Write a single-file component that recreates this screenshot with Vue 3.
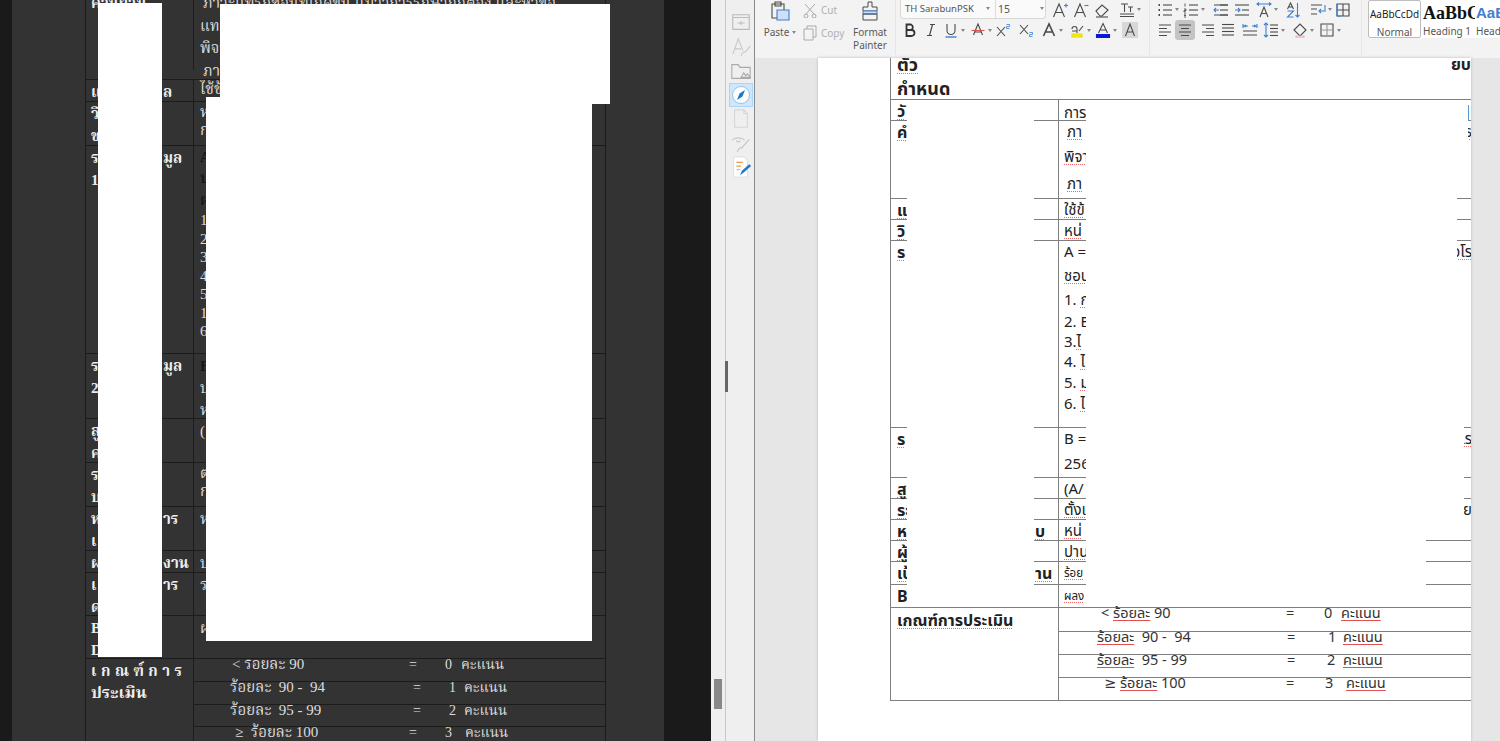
<script setup>
const S = '#4a4a4a', B = '#3d7fd6', R = '#d9534f'
const p = (d, stroke = S, fill = 'none', w = 1.1) => ({ d, stroke, fill, w })
const lines = (ys, x1 = 2, x2 = 14, c = S) => ys.map(y => p(`M${x1} ${y}H${x2}`, c))
const icons = {
  b: [p('M4.5 2.5h4.5a3 3 0 0 1 0 5.5H4.5zM4.5 8h5a3 3 0 0 1 0 6h-5z', '#333', 'none', 1.8)],
  i: [p('M7 2.5h5M4 13.5h5M9.5 2.5l-3 11', S, 'none', 1.2)],
  u: [p('M4 2v6.5a4 4 0 0 0 8 0V2', S), p('M2.5 15h11', B, 'none', 1.4)],
  strike: [p('M3.5 13L8 2l4.5 11M5 10h6', S), p('M1.5 8.5h13', R)],
  sup: [p('M2 5l8 9M10 5l-8 9', S), p('M11.5 2.5h3v2h-3v2h3', B, 'none', .8)],
  sub: [p('M2 3l8 9M10 3l-8 9', S), p('M11.5 10.5h3v2h-3v2h3', B, 'none', .8)],
  aout: [p('M2.5 14L8 2l5.5 12M5 10h6', S, 'none', 1.6)],
  hl: [p('M3 7a2.5 2.5 0 0 1 5 0v4M3 9h5M10 9l4-5', S), p('M3 12h10v3H3z', '#e6d90c', '#f7ea12')],
  acol: [p('M3.5 11L8 1.5l4.5 9.5M5 8h6', S), p('M1.5 12.5h13v3h-13z', '#0a18d8', '#0a18d8')],
  shade: [p('M0 0h16v16H0z', 'none', '#d8d8d8'), p('M3.5 14L8 2l4.5 12M5 10h6', S)],
  ainc: [p('M1.5 15L7 2l5.500 13M3.5 10.5h7', S), p('M12 3.5h4M14 1.5v4', B)],
  adec: [p('M1.5 15L7 2l5.500 13M3.5 10.5h7', S), p('M11.5 3.5h4', B)],
  erase: [p('M2 9l6-6 6 5-6 6H6z', S), p('M2 15h12', S)],
  tt: [p('M2 2h7M5.5 2v8M9 5h5M11.5 5v5', S), p('M1 12h14M1 14.5h14', S)],
  bullet: [...lines([3, 8, 13], 6, 15), p('M1.5 3h1.5M1.5 8h1.5M1.5 13h1.5', S, 'none', 2)],
  num: [...lines([3, 8, 13], 6, 15), p('M2 1.5v3M1 7h2v1.5H1V10h2M1 12h2M1 13.5h2M1 15h2', S, 'none', .9)],
  out: [...lines([3, 8, 13], 7, 15), p('M1 3h14M1 13h14', S), p('M6 8H1M3 6L1 8l2 2', B)],
  ind: [...lines([3, 13], 1, 15), p('M8 8h7', S), p('M1 8h5M4 6l2 2-2 2', B)],
  aspace: [p('M4 15L8 5l4 10M5.5 11.5h5', S), p('M1 2h14M3 .5L1 2l2 1.5M13 .5L15 2l-2 1.5', B)],
  sort: [p('M2.5 7L5.5 1l3 6M3.5 5h4', S), p('M2.5 9h6l-6 6h6', B), p('M12.5 1v14M10.5 13l2 2 2-2', B)],
  para: [p('M1 3h11M1 7h6M1 12h6', S), p('M15 3v6h-6M11 7l-2 2 2 2', B)],
  table: [p('M2 2h12v12H2zM8 2v12M2 8h12', S), p('M2 2v12M2 14h4', B)],
  left: [p('M2 3h12M2 6.5h8M2 10h12M2 13.5h8')],
  center: [p('M2 3h12M4 6.5h8M2 10h12M4 13.5h8')],
  right: [p('M2 3h12M6 6.5h8M2 10h12M6 13.5h8')],
  just: lines([2.5, 6, 9.5, 13]),
  dist: [p('M1 9h14M1 13h14'), p('M1 2v4M15 2v4M2 4h4M10 4h4M4 3L2 4l2 1M12 3l2 1-2 1', B)],
  lsp: [...lines([3, 6.5, 10, 13.5], 7, 15), p('M3 1v14M1 3l2-2 2 2M1 13l2 2 2-2', B)],
  fill: [p('M2 8l6-6 6 6-6 6z', S), p('M4 14h8v2H4z', '#e8b8b8', '#f3d8d8')],
  border: [p('M2 2h12v12H2z', S), p('M8 2v12M2 8h12', '#999')],
  paste: [p('M4 3h12v14H4z', S), p('M7 1h6v4H7z', S), p('M9 9h12v10H9z', B, '#cfe0f5')],
  cut: [p('M3 2l9 10M13 2L4 12', '#aaa'), p('M2 14a2 2 0 1 0 4 0 2 2 0 1 0-4 0M10 14a2 2 0 1 0 4 0 2 2 0 1 0-4 0', '#aaa')],
  copy: [p('M5 1h9v11H5z', '#aaa'), p('M2 4h9v11H2z', '#aaa', '#f3f3f3')],
  brush: [p('M8 1h4v5h5v4H3V6h5z', S), p('M3 10h14v3H3z', B, '#cfe0f5'), p('M3 13h14v6H3z', S)],
}
const row1a = [
  { i: 'ainc', ml: 6 }, { i: 'adec', ml: 5 }, { i: 'erase', ml: 5 }, { i: 'tt', ml: 9, a: 1 },
]
const row2a = [
  { i: 'b', ml: 2 }, { i: 'i', ml: 5 }, { i: 'u', ml: 4, a: 1 }, { i: 'strike', ml: 5, a: 1 }, { i: 'sup', ml: 3 },
  { i: 'sub', ml: 7 }, { i: 'aout', ml: 7, a: 1 }, { i: 'hl', ml: 6, a: 1 }, { i: 'acol', ml: 4, a: 1 }, { i: 'shade', ml: 5 },
]
const row1b = [
  { i: 'bullet', ml: 7, a: 1 }, { i: 'num', ml: 4, a: 1 }, { i: 'out', ml: 8 }, { i: 'ind', ml: 5 },
  { i: 'aspace', ml: 6, a: 1 }, { i: 'sort', ml: 7 }, { i: 'para', ml: 9, a: 1 }, { i: 'table', ml: 3 },
]
const row2b = [
  { i: 'left', ml: 7 }, { i: 'center', ml: 4, on: 1 }, { i: 'right', ml: 5 }, { i: 'just', ml: 4 }, { i: 'dist', ml: 6 },
  { i: 'lsp', ml: 5, a: 1 }, { i: 'fill', ml: 7, a: 1 }, { i: 'border', ml: 5, a: 1 },
]

const leftRows = [
  { h: 80, clip: -9, label: [{ a: 'คำนิยาม' }], val: [{ t: 'ภาวะแทรกซ้อนที่เกิดขึ้น แม้ว่าการรักษาถูกต้อง และหัวข้อ', in: 1, lh: 23 }, { t: 'แท', lh: 22 }, { t: 'พิจา', lh: 23 }, { t: 'ภา', in: 1, lh: 22 }] },
  { h: 22, label: [{ a: 'แ', b: 'ล' }], val: [{ t: 'ใช้ข้', lh: 16 }] },
  { h: 44, label: [{ a: 'วิ' }, { a: 'ข' }], val: [{ t: 'ห', lh: 18 }, { t: 'ก', lh: 18 }] },
  { h: 208, label: [{ a: 'ร', b: 'มูล' }, { a: '1' }], val: [{ t: 'A', dark: 1, lh: 20 }, { t: 'บ', dark: 1 }, { t: 'ผ', dark: 1 }, ...['1', '2', '3', '4', '5', '1', '6'].map(t => ({ t, lh: 18.5 }))] },
  { h: 65, label: [{ a: 'ร', b: 'มูล' }, { a: '2' }], val: [{ t: 'B', dark: 1 }, { t: 'บ' }, { t: 'ห' }] },
  { h: 44, label: [{ a: 'สู' }, { a: 'ค' }], val: [{ t: '(' }] },
  { h: 44, label: [{ a: 'ร' }, { a: 'บ', b: '' }], val: [{ t: 'ต', lh: 18 }, { t: 'ก', lh: 18 }] },
  { h: 44, label: [{ a: 'ห', b: 'าร' }, { a: 'เ' }], val: [{ t: 'ห' }] },
  { h: 22, label: [{ a: 'ผ', b: 'งาน' }], val: [{ t: 'บ' }] },
  { h: 43, label: [{ a: 'เ', b: 'าร' }, { a: 'ด' }], val: [{ t: 'ร' }] },
  { h: 43, label: [{ a: 'B' }, { a: 'D' }], val: [{ t: 'ผ' }] },
]
const leftCrit = [
  { h: 23, pos: [38, 215, 251, 267], t: ['< ร้อยละ 90', '=', '0', 'คะแนน'] },
  { h: 23, pos: [36, 219, 255, 270], t: ['ร้อยละ  90 -  94', '=', '1', 'คะแนน'] },
  { h: 22, pos: [36, 219, 255, 270], t: ['ร้อยละ  95 - 99', '=', '2', 'คะแนน'] },
  { h: 30, pos: [41, 215, 251, 271], t: ['≥  ร้อยละ 100', '=', '3', 'คะแนน'] },
]
const cols = pos => ({
  paddingLeft: pos[0] + 'px',
  gridTemplateColumns: pos.slice(1).map((x, i) => `${x - pos[i]}px`).join(' ') + ' 1fr',
})

const docRows = [
  { h: 21, label: 'วั', val: [{ t: 'การ', plain: 1, lh: 25 }], tail: '|', tailPlain: 1 },
  { h: 78, label: 'คำ', val: [{ t: 'ภา', in: 1, lh: 25 }, { t: 'พิจา', lh: 25 }, { t: 'ภา', in: 1, lh: 28 }], tail: 'ธ' },
  { h: 21, label: 'แ', val: [{ t: 'ใช้ข้' }] },
  { h: 21, label: 'วิ', val: [{ t: 'หน่' }] },
  { h: 187, label: 'ร', val: [{ t: 'A =', plain: 1, lh: 24 }, { t: 'ชอบ', lh: 25 }, { pre: '1. ', t: 'ก', lh: 23 }, { t: '2. B', plain: 1, lh: 20 }, { pre: '3.', t: 'ไ', lh: 20 }, { pre: '4. ', t: 'ไ', lh: 21 }, { pre: '5. ', t: 'ม', lh: 21 }, { pre: '6. ', t: 'ไ', lh: 20 }], tail: 'จโร' },
  { h: 50, label: 'ร', val: [{ t: 'B =', plain: 1, lh: 25 }, { t: '256', plain: 1, lh: 25 }], tail: 'เร' },
  { h: 21, label: 'สู', val: [{ t: '(A/', plain: 1 }] },
  { h: 21, label: 'ระ', val: [{ t: 'ตั้งแ' }], tail: 'ย' },
  { h: 21, label: 'ห', end: 'บ', val: [{ t: 'หน่' }] },
  { h: 21, label: 'ผู้', val: [{ t: 'ปาน' }] },
  { h: 23, label: 'เป้', end: 'าน', val: [{ t: 'ร้อย', small: 1 }] },
  { h: 23, label: 'B', plain: 1, val: [{ t: 'ผลง', small: 1 }] },
]
const docCrit = [
  { h: 24, pos: [42, 227, 265, 282], t: ['<', 'ร้อยละ', ' 90', '=', '0', 'คะแนน'] },
  { h: 23, pos: [38, 228, 269, 284], t: ['', 'ร้อยละ', '  90 -  94', '=', '1', 'คะแนน'] },
  { h: 23, pos: [38, 228, 268, 284], t: ['', 'ร้อยละ', '  95 - 99', '=', '2', 'คะแนน'] },
  { h: 23, pos: [45, 227, 266, 287], t: ['≥', 'ร้อยละ', ' 100', '=', '3', 'คะแนน'] },
]
const docMasks = [
  [907, 1034, 100, 605], [1086, 1468, 100, 198], [1086, 1457, 198, 262], [1086, 1471, 262, 376],
  [1086, 1425, 376, 382], [1086, 1471, 382, 425], [1086, 1464, 425, 515], [1086, 1471, 515, 530], [1086, 1426, 530, 606],
]
const box = ([x1, x2, y1, y2]) => ({ left: x1 + 'px', width: x2 - x1 + 'px', top: y1 + 'px', height: y2 - y1 + 'px' })
const sideIcons = [
  { d: 'M3 3h18v16H3zM3 6h18M8 12h8M12 10v4', c: '#bbb' },
  { d: 'M3 20L9 3l5 13M5 14h7M12 22c1-4 4-5 5-5l5-6', c: '#c8c8c8' },
  { d: 'M2 20V5h7l2 3h11v12zM12 19l3-5 2 3 2-2 3 4z', c: '#aaa' },
  { d: '', c: '' },
  { d: 'M5 2h10l4 4v15H5zM15 2v4h4', c: '#d6d6d6' },
  { d: 'M2 9a8 5 0 0 1 14 0M7 9a2 2 0 1 0 4 0M8 22c1-4 3-5 5-5l8-9', c: '#c4c4c4' },
  { d: 'note', c: '' },
]
</script>

<template>
  <div class="screen">
    <section class="viewer">
      <div class="sheet">
        <div class="ltable">
          <div v-for="(r, i) in leftRows" :key="i" class="lrow" :style="{ height: r.h + 'px' }">
            <div class="lhead" :style="{ marginTop: (r.clip || 0) + 'px' }">
              <div v-for="(l, j) in r.label" :key="j" class="lline"><span class="la">{{ l.a }}</span><span class="lb">{{ l.b }}</span></div>
            </div>
            <div class="lval" :style="{ marginTop: (r.clip || 0) + 'px' }">
              <div v-for="(v, j) in r.val" :key="j" class="vline" :class="{ dark: v.dark, ind: v.in }" :style="{ lineHeight: (v.lh || 22) + 'px' }">{{ v.t }}</div>
            </div>
          </div>
          <div class="lrow last">
            <div class="lhead"><div class="lline spaced">เกณฑ์การ</div><div class="lline big">ประเมิน</div></div>
            <div class="lcrit">
              <div v-for="(c, i) in leftCrit" :key="i" class="crow" :style="[{ height: c.h + 'px' }, cols(c.pos)]">
                <span v-for="(t, j) in c.t" :key="j" :class="{ cfirst: j === 0 }">{{ t }}</span>
              </div>
            </div>
          </div>
        </div>
      </div>
    </section>

    <aside class="rail"><div class="thumb"></div></aside>

    <nav class="side">
      <div class="grip"></div>
      <div v-for="(s, i) in sideIcons" :key="i" class="sitem" :class="{ active: i === 3 }">
        <svg v-if="i === 3" width="20" height="20" viewBox="0 0 20 20"><circle cx="10" cy="10" r="8.5" fill="#fff" stroke="#8cc4ef"/><path d="M14 5L11.5 11.5 6 15l2.500-6.500z" fill="#1c79c6"/></svg>
        <svg v-else-if="s.d === 'note'" width="22" height="22" viewBox="0 0 24 24"><path d="M4 1h11l4 4v18H4z" fill="#fff" stroke="#ddd"/><path d="M7 7h7M7 11h5" stroke="#e89a4c" stroke-width="1.500"/><path d="M7 15h4" stroke="#aaa"/><path d="M11 21l2-5 8-7 2 2-8 7z" fill="#1c79c6"/></svg>
        <svg v-else width="22" height="22" viewBox="0 0 24 24"><path :d="s.d" fill="none" :stroke="s.c" stroke-width="1.200"/></svg>
      </div>
    </nav>

    <main class="word">
      <header class="ribbon">
        <div class="g-clip">
          <div class="paste">
            <svg width="24" height="21" viewBox="0 0 24 21"><path v-for="(q, k) in icons.paste" :key="k" :d="q.d" :stroke="q.stroke" :fill="q.fill" :stroke-width="q.w"/></svg>
            <span class="lab paste-lab">Paste<i class="arrow"></i></span>
          </div>
          <div class="cutcopy">
            <div class="cc"><svg width="16" height="16" viewBox="0 0 16 16"><path v-for="(q, k) in icons.cut" :key="k" :d="q.d" :stroke="q.stroke" :fill="q.fill"/></svg>Cut</div>
            <div class="cc"><svg width="16" height="16" viewBox="0 0 16 16"><path v-for="(q, k) in icons.copy" :key="k" :d="q.d" :stroke="q.stroke" :fill="q.fill"/></svg>Copy</div>
          </div>
          <div class="painter">
            <svg width="20" height="21" viewBox="0 0 20 21"><path v-for="(q, k) in icons.brush" :key="k" :d="q.d" :stroke="q.stroke" :fill="q.fill" stroke-width="1"/></svg>
            <span class="lab">Format</span><span class="lab">Painter</span>
          </div>
        </div>
        <div class="g-font">
          <div class="trow top">
            <div class="combo">
              <span class="fname">TH SarabunPSK</span><i class="arrow a1"></i>
              <span class="fsize">15</span><i class="arrow a2"></i>
            </div>
            <template v-for="t in row1a" :key="t.i">
              <svg class="ic" :style="{ marginLeft: t.ml + 'px' }" width="16" height="16" viewBox="0 0 16 16"><path v-for="(q, k) in icons[t.i]" :key="k" :d="q.d" :stroke="q.stroke" :fill="q.fill" :stroke-width="q.w"/></svg>
              <i v-if="t.a" class="arrow side-arrow"></i>
            </template>
          </div>
          <div class="trow">
            <template v-for="t in row2a" :key="t.i">
              <svg class="ic" :style="{ marginLeft: t.ml + 'px' }" width="16" height="16" viewBox="0 0 16 16"><path v-for="(q, k) in icons[t.i]" :key="k" :d="q.d" :stroke="q.stroke" :fill="q.fill" :stroke-width="q.w"/></svg>
              <i v-if="t.a" class="arrow side-arrow"></i>
            </template>
          </div>
        </div>
        <div class="g-para">
          <div class="trow top">
            <template v-for="t in row1b" :key="t.i">
              <svg class="ic" :style="{ marginLeft: t.ml + 'px' }" width="16" height="16" viewBox="0 0 16 16"><path v-for="(q, k) in icons[t.i]" :key="k" :d="q.d" :stroke="q.stroke" :fill="q.fill" :stroke-width="q.w"/></svg>
              <i v-if="t.a" class="arrow side-arrow"></i>
            </template>
          </div>
          <div class="trow">
            <template v-for="t in row2b" :key="t.i">
              <span class="ibox" :class="{ on: t.on }" :style="{ marginLeft: t.ml + 'px' }"><svg width="16" height="16" viewBox="0 0 16 16"><path v-for="(q, k) in icons[t.i]" :key="k" :d="q.d" :stroke="q.stroke" :fill="q.fill" :stroke-width="q.w"/></svg></span>
              <i v-if="t.a" class="arrow side-arrow"></i>
            </template>
          </div>
        </div>
        <div class="g-style">
          <div class="styles">
            <div class="st normal"><span class="sample s0">AaBbCcDd</span><span class="sname">Normal</span></div>
            <div class="st h1"><span class="sample s1">AaBbC</span><span class="sname">Heading 1</span></div>
            <div class="st h2"><span class="sample s2">AaBb</span><span class="sname">Heading 2</span></div>
          </div>
        </div>
      </header>

      <div class="canvas">
        <div class="page">
          <div class="doc">
            <div class="dtop">
              <div class="dtline first"><span class="sq">ตัว</span><span class="dtail">ยบ</span></div>
              <div class="dtline">กำหนด</div>
            </div>
            <div v-for="(r, i) in docRows" :key="i" class="drow" :style="{ height: r.h + 'px' }">
              <div class="dhead"><span :class="{ sq: !r.plain }">{{ r.label }}</span><span v-if="r.end" class="dend sq">{{ r.end }}</span></div>
              <div class="dval">
                <div class="dlines" :class="{ multi: r.val.length > 1 }">
                  <div v-for="(v, j) in r.val" :key="j" :class="{ dsmall: v.small, ind: v.in }" :style="{ lineHeight: (v.lh || 21) + 'px' }">{{ v.pre }}<span :class="{ sq: !v.plain }">{{ v.t }}</span></div>
                </div>
                <span v-if="r.tail" class="dtl" :class="{ sq: !r.tailPlain }">{{ r.tail }}</span>
              </div>
            </div>
            <div class="drow dlast">
              <div class="dhead crit"><span class="sq">เกณฑ์การประเมิน</span></div>
              <div class="dcrit">
                <div v-for="(c, i) in docCrit" :key="i" class="dcrow" :style="[{ height: c.h + 'px' }, cols(c.pos)]">
                  <span>{{ c.t[0] }}<template v-if="c.t[0]">&nbsp;</template><span class="red">{{ c.t[1] }}</span>{{ c.t[2] }}</span><span>{{ c.t[3] }}</span><span>{{ c.t[4] }}</span><span class="red">{{ c.t[5] }}</span>
                </div>
              </div>
            </div>
          </div>
        </div>
      </div>
    </main>

    <div class="mask" style="left:98px;top:3px;width:64px;height:654px"></div>
    <div class="mask" style="left:206px;top:97px;width:386px;height:544px"></div>
    <div class="mask" style="left:220px;top:4px;width:390px;height:100px"></div>
    <div class="frag">2563 (ห</div>
    <div v-for="(m, i) in docMasks" :key="'d' + i" class="mask" :style="box(m)"></div>
  </div>
</template>

<style>
html, body { margin: 0; padding: 0; overflow: hidden; background: #1a1a1a; }
</style>

<style scoped>
.screen { position: relative; display: flex; width: 1500px; height: 741px; overflow: hidden; font-family: "Noto Sans", "Noto Sans Thai", "DejaVu Sans", sans-serif; }
.mask { position: absolute; background: #fff; }
.frag { position: absolute; left: 1425px; top: 377px; width: 46px; height: 4px; overflow: hidden; font-size: 13px; line-height: 17px; color: #333; white-space: nowrap; }

.viewer { box-sizing: border-box; width: 711px; height: 741px; padding: 0 47px 0 12px; background: #1a1a1a; }
.sheet { box-sizing: border-box; height: 741px; padding-left: 73px; background: #333; overflow: hidden; }
.ltable { box-sizing: border-box; width: 521px; border-left: 1px solid #1c1c1c; border-right: 1px solid #1c1c1c; font-family: "Liberation Serif", "Noto Serif Thai", "DejaVu Serif", serif; color: #eee; }
.lrow { box-sizing: border-box; display: flex; border-bottom: 1px solid #1c1c1c; overflow: hidden; }
.lrow.last { height: 90px; border-bottom: 0; }
.lhead { box-sizing: border-box; flex: none; width: 108px; height: 100%; padding: 1px 0 0 5px; border-right: 1px solid #1c1c1c; font-weight: 700; font-size: 15px; }
.lline { display: grid; grid-template-columns: 72px auto; line-height: 22px; }
.lline.spaced { display: block; letter-spacing: 4.500px; white-space: nowrap; }
.last .lline { display: block; }
.lline.big { font-size: 16.500px; }
.la { white-space: nowrap; }
.lval { flex: 1; padding: 1px 0 0 6px; font-size: 15px; color: #ddd; white-space: nowrap; overflow: hidden; }
.vline.dark { color: #161616; font-weight: 600; }
.ind { padding-left: 3px; }
.lcrit { flex: 1; font-size: 14px; color: #ddd; }
.crow { box-sizing: border-box; display: grid; align-items: start; border-bottom: 1px solid #1c1c1c; white-space: pre; line-height: 11px; }
.cfirst { font-size: 15px; }

.rail { box-sizing: border-box; flex: none; width: 15px; height: 741px; padding: 679px 0 0 3px; background: #efefef; border-right: 1px solid #c8c8c8; }
.thumb { width: 8px; height: 30px; background: #888; }

.side { position: relative; box-sizing: border-box; flex: none; width: 29px; height: 741px; padding: 11px 1px 0 3px; background: #efefef; border-right: 1px solid #8a8a8a; }
.grip { position: absolute; left: -1px; top: 361px; width: 3px; height: 31px; background: #666; }
.sitem { display: flex; align-items: center; justify-content: center; width: 24px; height: 24px; }
.sitem.active { box-sizing: border-box; background: #cfe6fb; border: 1px solid #abd5f7; }

.word { display: flex; flex-direction: column; flex: 1; min-width: 0; height: 741px; }
.ribbon { display: flex; flex: none; height: 58px; background: #f3f3f3; overflow: hidden; }
.lab { font-size: 10px; line-height: 13px; color: #5a5a5a; white-space: nowrap; }
.g-clip { box-sizing: border-box; display: flex; flex: none; width: 141px; height: 55px; padding-left: 6px; border-right: 1px solid #e6e6e6; }
.paste { display: flex; flex-direction: column; align-items: center; width: 38px; padding-top: 1px; }
.paste-lab { margin-top: 4px; }
.cutcopy { width: 50px; padding-left: 3px; margin-left: 0; }
.cc { display: flex; align-items: center; gap: 3px; height: 16px; margin-top: 2px; font-size: 10px; color: #b0b0b0; }
.cc + .cc { margin-top: 7px; }
.painter { display: flex; flex-direction: column; align-items: center; width: 36px; padding-top: 1px; }
.painter svg { margin-bottom: 4px; }
.arrow { display: inline-block; width: 0; height: 0; border-left: 2.500px solid transparent; border-right: 2.500px solid transparent; border-top: 3px solid #888; }
.paste-lab .arrow { margin-left: 3px; vertical-align: 2px; }
.g-font { box-sizing: border-box; flex: none; width: 253px; padding-left: 4px; }
.g-para { box-sizing: border-box; flex: none; width: 212px; padding-left: 0; border-left: 1px solid #e6e6e6; height: 55px; }
.trow { display: flex; align-items: center; height: 20px; margin-top: 1px; }
.trow.top { height: 19px; margin-top: 0; }
.trow svg { flex: none; }
.side-arrow { flex: none; margin-left: 2px; }
.combo { position: relative; box-sizing: border-box; display: flex; align-items: center; width: 146px; height: 19px; margin-top: -1px; background: #fafafa; border: 1px solid #d8d8d8; border-top: 0; border-radius: 0 0 4px 4px; font-size: 10.500px; color: #555; }
.fname { width: 81px; padding-left: 4px; font-size: 9.500px; white-space: nowrap; }
.a1 { margin-right: 5px; }
.fsize { width: 42px; padding-left: 2px; border-left: 1px solid #ddd; line-height: 18px; }
.ibox { display: inline-flex; align-items: center; justify-content: center; flex: none; width: 16px; height: 20px; }
.ibox.on { width: 20px; margin-right: -2px; background: #c4c4c4; border-radius: 3px; transform: translateX(-2px); }
.g-style { flex: 1; min-width: 0; padding-left: 6px; border-left: 1px solid #e6e6e6; height: 55px; overflow: hidden; }
.styles { display: flex; width: 134px; height: 38px; background: #fff; overflow: hidden; }
.st { box-sizing: border-box; display: flex; flex-direction: column; align-items: center; flex: none; height: 38px; overflow: hidden; white-space: nowrap; }
.normal { width: 53px; border: 1px solid #bdbdbd; border-radius: 2px; }
.h1 { width: 55px; align-items: flex-start; padding-left: 2px; }
.h2 { width: 40px; align-items: flex-start; }
.sample { height: 24px; line-height: 26px; }
.s0 { font-size: 10px; color: #222; }
.s1 { font: 700 18px/26px "Liberation Serif", serif; color: #111; width: 52px; overflow: hidden; }
.s2 { font: 700 15px/26px "Liberation Sans", sans-serif; color: #3f7fcf; }
.sname { font-size: 10px; line-height: 14px; color: #555; }

.canvas { display: flex; flex: 1; min-height: 0; padding-left: 63px; padding-right: 29px; background: #e6e6e6; }
.page { box-sizing: border-box; flex: 1; min-width: 0; padding-left: 72px; background: #fff; overflow: hidden; box-shadow: 0 0 3px #bbb; }
.doc { box-sizing: border-box; width: 640px; color: #222; font-size: 15px; border-left: 1px solid #7f7f7f; }
.dtop { box-sizing: border-box; height: 42px; border-bottom: 1px solid #7f7f7f; font-weight: 700; font-size: 18px; }
.dtline { display: flex; justify-content: space-between; width: 573px; padding-left: 6px; line-height: 20px; height: 20px; }
.dtline.first { line-height: 12px; }
.dtail { font-size: 16px; margin-right: -1px; }
.drow { box-sizing: border-box; display: flex; border-bottom: 1px solid #7f7f7f; }
.drow.dlast { height: 93px; border-bottom: 1px solid #7f7f7f; }
.dhead { box-sizing: border-box; position: relative; flex: none; width: 168px; padding: 1px 0 0 6px; border-right: 1px solid #7f7f7f; font-weight: 700; font-size: 16px; line-height: 20px; }
.dhead.crit { padding-top: 2px; line-height: 20px; }
.dend { position: absolute; left: 144px; top: 1px; }
.dval { display: flex; justify-content: space-between; box-sizing: border-box; width: 413px; padding-left: 5px; overflow: hidden; }
.dlines.multi { margin-top: -2px; }
.dsmall { font-size: 11.500px; }
.dtl { flex: none; line-height: 21px; }
.sq { text-decoration: underline dotted #ee6666 1px; text-underline-offset: 2px; }
.dcrit { flex: 1; }
.dcrow { box-sizing: border-box; display: grid; align-items: start; border-bottom: 1px solid #7f7f7f; white-space: pre; line-height: 8px; font-size: 14.500px; color: #333; }
.dcrow:last-child { border-bottom: 0; }
.red { text-decoration: underline solid #e05050 1px; text-underline-offset: 2px; }
</style>
